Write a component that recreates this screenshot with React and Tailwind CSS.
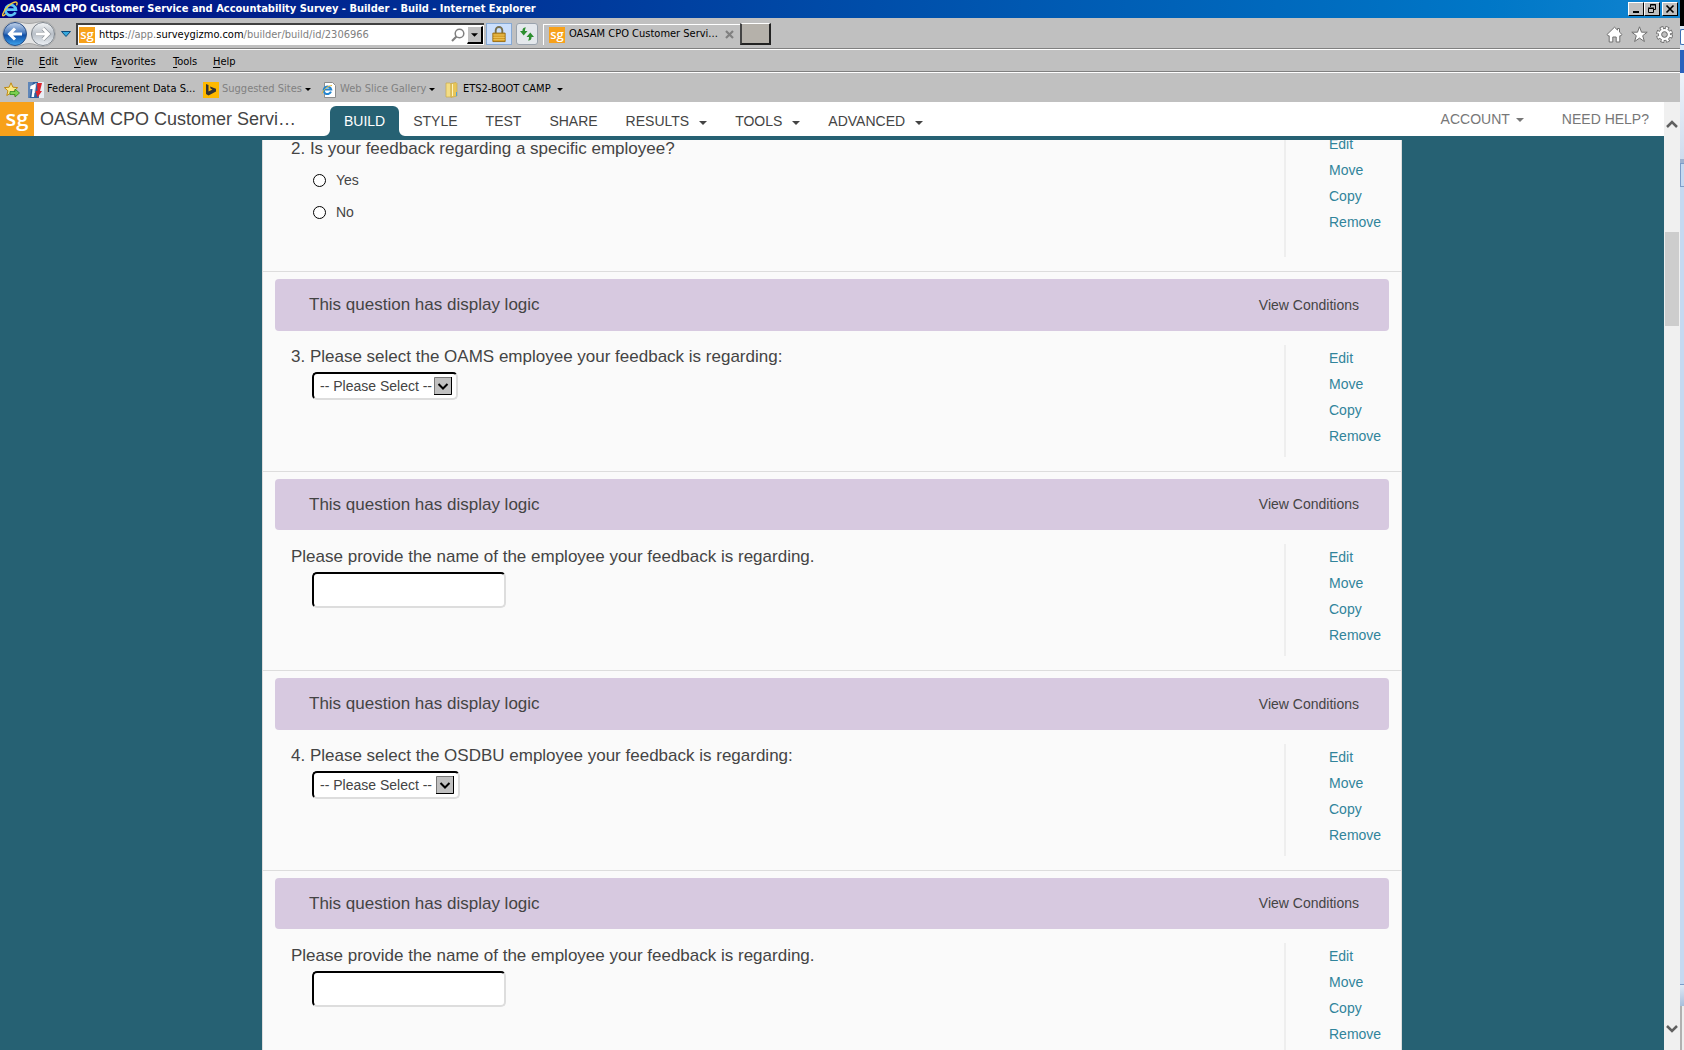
import clsx from "clsx";
import { useId } from "react";

const MENU = [
  ["", "F", "ile", "w-8"],
  ["", "E", "dit", "w-[35px]"],
  ["", "V", "iew", "w-[37px]"],
  ["F", "a", "vorites", "w-[62px]"],
  ["", "T", "ools", "w-10"],
  ["", "H", "elp", "w-10"],
];

const NAV = [
  { label: "BUILD", active: true },
  { label: "STYLE" },
  { label: "TEST" },
  { label: "SHARE" },
  { label: "RESULTS", menu: true },
  { label: "TOOLS", menu: true },
  { label: "ADVANCED", menu: true },
];

const ACTIONS = ["Edit", "Move", "Copy", "Remove"];

function Caret({ className }) {
  return (
    <svg viewBox="0 0 8 4" className={clsx("shrink-0", className)} fill="currentColor" aria-hidden="true">
      <path d="M0 0h8L4 4z" />
    </svg>
  );
}

function SgLogo({ className }) {
  return (
    <span
      className={clsx(
        "flex shrink-0 items-center justify-center bg-[#f7a11a] font-['Open_Sans',sans-serif] font-semibold text-white",
        className
      )}
    >
      sg
    </span>
  );
}

function IeIcon({ className }) {
  return (
    <svg viewBox="0 0 16 16" className={clsx("shrink-0", className)} fill="none" aria-hidden="true">
      <path d="M13.500 11.200A5.200 5.200 0 1 1 13.900 8.700H5" stroke="#5cc3f5" strokeWidth="2.800" />
      <path d="M3.600 13C1.200 15.600.2 15 .7 13.200 1.800 9 8.500 1.600 13.400 1c2-.2 2 1.700 1 3.400" stroke="#f3c73a" strokeWidth="1.400" />
    </svg>
  );
}

function TitleBar() {
  const button =
    "flex h-[14px] w-4 items-center justify-center border border-t-white border-l-white border-r-black border-b-black bg-[#c0c0c0] text-black";
  return (
    <div className="flex h-[18px] shrink-0 items-center bg-linear-to-r from-[#000080] to-[#1084d0] px-[2px]">
      <IeIcon className="size-4" />
      <h1 className="ml-[2px] flex-1 truncate text-[11px] font-bold text-white">
        OASAM CPO Customer Service and Accountability Survey - Builder - Build - Internet Explorer
      </h1>
      <button className={button} aria-label="Minimize">
        <svg viewBox="0 0 12 10" className="h-[10px] w-3">
          <path d="M3 7h6v2H3z" />
        </svg>
      </button>
      <button className={button} aria-label="Restore">
        <svg viewBox="0 0 12 10" className="h-[10px] w-3" fill="none" stroke="currentColor">
          <path d="M4.500 3V.5h5v5H8M4 1h6M2.500 4.500h5v4h-5zM2 4h6" />
        </svg>
      </button>
      <button className={clsx(button, "ml-[2px]")} aria-label="Close">
        <svg viewBox="0 0 12 10" className="h-[10px] w-3" fill="none" stroke="currentColor" strokeWidth="1.700">
          <path d="M2.500 1.500l7 7m0-7l-7 7" />
        </svg>
      </button>
    </div>
  );
}

function HistoryButtons() {
  return (
    <div className="relative h-[26px] w-[54px] shrink-0">
      <svg viewBox="0 0 54 26" className="h-[26px] w-[54px]" fill="none" aria-hidden="true">
        <defs>
          <linearGradient id="back" x1="0" y1="0" x2="0" y2="1">
            <stop offset="0" stopColor="#c3d3ea" />
            <stop offset=".45" stopColor="#4a7cc0" />
            <stop offset=".55" stopColor="#0f4fa8" />
            <stop offset="1" stopColor="#3fa5ee" />
          </linearGradient>
          <linearGradient id="forward" x1="0" y1="0" x2="0" y2="1">
            <stop offset="0" stopColor="#f4f6f8" />
            <stop offset=".5" stopColor="#b9c0c8" />
            <stop offset="1" stopColor="#eef2f6" />
          </linearGradient>
        </defs>
        <path
          d="M13 .5c6 0 8 2 14 2s8-2 14-2a12.500 12.500 0 0 1 0 25c-6 0-8-3-14-3s-8 3-14 3A12.500 12.500 0 0 1 13 .5z"
          fill="#e4e4e4"
          stroke="#a6a6a6"
        />
        <circle cx="13" cy="13" r="11.500" fill="url(#back)" stroke="#2b4f86" />
        <circle cx="41" cy="13" r="11.500" fill="url(#forward)" stroke="#7d848c" />
        <path d="M20 13H8m5-5.500L7.500 13l5.500 5.500" stroke="#fff" strokeWidth="3" />
        <path d="M34 13h12m-5-5.500l5.500 5.500-5.500 5.500" stroke="#8b9096" strokeWidth="4" />
        <path d="M34 13h12m-5-5.500l5.500 5.500-5.500 5.500" stroke="#fff" strokeWidth="2.800" />
      </svg>
      <button className="absolute inset-y-0 left-0 w-[26px] rounded-full" aria-label="Back" />
      <button className="absolute inset-y-0 right-0 w-[26px] rounded-full" aria-label="Forward" />
    </div>
  );
}

function AddressBar() {
  return (
    <div className="flex h-8 shrink-0 items-center border-b border-white bg-[#c0c0c0] pt-px shadow-[inset_0_-1px_0_#808080]">
      <div className="flex h-[30px] flex-1 items-center pl-[2px]">
        <HistoryButtons />
        <button className="ml-[5px]" aria-label="Recent pages">
          <svg viewBox="0 0 10 6" className="h-[6px] w-[10px]">
            <path d="M.5.5h9L5 5.500z" fill="#36a9dd" stroke="#0d4c7c" />
          </svg>
        </button>
        <div className="ml-[5px] flex h-[22px] w-[408px] items-center border-t-2 border-l-2 border-[#404040] bg-white px-px">
          <SgLogo className="size-4 pb-[2px] text-[13px] leading-[12px]" />
          <div className="ml-1 flex-1 truncate text-[11px] text-[#808080]">
            <span className="text-black">https</span>://app.<span className="text-black">surveygizmo.com</span>
            /builder/build/id/2306966
          </div>
          <button aria-label="Search">
            <svg viewBox="0 0 14 14" className="size-[14px]" fill="none" stroke="#808080">
              <circle cx="8.500" cy="5.500" r="4.300" strokeWidth="1.500" />
              <path d="M5.500 8.500L1 13" strokeWidth="2.200" />
            </svg>
          </button>
          <button
            className="ml-[2px] flex h-[18px] w-4 items-center justify-center border border-t-white border-r-2 border-b-2 border-l-white border-r-black border-b-black bg-[#c0c0c0]"
            aria-label="Show address list"
          >
            <Caret className="h-1 w-[7px] text-black" />
          </button>
        </div>
        <button
          className="ml-[2px] flex h-[22px] w-[26px] items-center justify-center border border-[#86a9d4] bg-[#cbdffc]"
          aria-label="Security report"
        >
          <svg viewBox="0 0 14 18" className="h-[17px] w-[14px]" fill="none">
            <path d="M3.500 8V4.500a3.500 3.500 0 0 1 7 0V8" stroke="#77704f" strokeWidth="2" />
            <path d="M.5 7.500h13v9H.5z" fill="#d49b24" stroke="#9a6d12" />
            <path d="M1 9.500h12M1 12h12M1 14.500h12" stroke="#efc961" />
          </svg>
        </button>
        <button
          className="ml-1 flex size-[22px] items-center justify-center rounded-[3px] border border-[#9aa3ad] bg-[#e4e8ec]"
          aria-label="Refresh"
        >
          <svg viewBox="0 0 16 16" className="size-4" fill="#2c8f2f">
            <path d="M7 1.500C4 1.500 3.500 3 3.500 5H1l3.700 4.500L8.500 5H6c0-1.500.2-2.500 1-3.500zM9 14.500c3 0 3.500-1.500 3.500-3.500H15l-3.700-4.500L7.500 11H10c0 1.500-.2 2.500-1 3.500z" />
          </svg>
        </button>
        <div className="ml-[5px] flex h-[21px] w-[197px] items-center border-t border-l border-white pr-[6px] pl-[5px]">
          <SgLogo className="size-4 pb-[2px] text-[13px] leading-[12px]" />
          <span className="ml-1 flex-1 text-[11px] whitespace-nowrap text-black">OASAM CPO Customer Servi...</span>
          <button aria-label="Close tab">
            <svg viewBox="0 0 9 9" className="size-[9px]" fill="none" stroke="#808080" strokeWidth="2.200">
              <path d="M1 1l7 7m0-7L1 8" />
            </svg>
          </button>
        </div>
        <button
          className="h-[22px] w-[31px] border border-t-white border-r-2 border-b-2 border-l-2 border-r-[#222] border-b-[#222] border-l-[#444] bg-[#b5b1aa]"
          aria-label="New tab"
        />
      </div>
      <div className="flex items-center gap-2 pr-[7px]">
        <button aria-label="Home">
          <svg viewBox="0 0 17 17" className="size-[17px]" fill="#fff" stroke="#707070">
            <path d="M8.500 1.200L1 8.500l1 1.300h1.200v6.200h3.600v-5h3.400v5h3.600V9.800H15l1-1.300-2.500-2.400V2.500h-2v1.600z" />
          </svg>
        </button>
        <button aria-label="Favorites">
          <svg viewBox="0 0 17 17" className="size-[17px]" fill="#fff" stroke="#707070">
            <path d="M8.500.8l2 5.400h5.700l-4.500 3.500 1.700 5.800-4.900-3.400-4.900 3.400 1.700-5.800L.8 6.200h5.700z" />
          </svg>
        </button>
        <button aria-label="Tools">
          <svg viewBox="0 0 17 17" className="size-[17px]" fill="none">
            <circle cx="8.500" cy="8.500" r="6" stroke="#707070" strokeWidth="5" strokeDasharray="3.100 1.612" />
            <circle cx="8.500" cy="8.500" r="5.600" stroke="#707070" strokeWidth="1.600" />
            <circle cx="8.500" cy="8.500" r="6" stroke="#fff" strokeWidth="3.200" strokeDasharray="1.900 2.812" strokeDashoffset="-.6" />
            <circle cx="8.500" cy="8.500" r="4.300" stroke="#fff" strokeWidth="2.600" />
            <circle cx="8.500" cy="8.500" r="2.800" stroke="#707070" fill="#c0c0c0" />
          </svg>
        </button>
      </div>
    </div>
  );
}

function MenuBar() {
  return (
    <div className="flex h-[23px] shrink-0 items-center border-b border-white bg-[#c0c0c0] pt-[2px] pl-[7px] text-[11px] text-black shadow-[inset_0_-1px_0_#808080]">
      {MENU.map(([before, key, after, width]) => (
        <button key={key} className={clsx("text-left", width)}>
          {before}
          <span className="underline underline-offset-2">{key}</span>
          {after}
        </button>
      ))}
    </div>
  );
}

function FavoritesBar() {
  return (
    <div className="flex h-[29px] shrink-0 items-center bg-[#c0c0c0] pt-1 pl-1 text-[11px] text-black">
      <button aria-label="Add to favorites bar">
        <svg viewBox="0 0 16 16" className="size-4">
          <path d="M7 .8l1.900 4.400 4.800.4-3.600 3.200 1 4.700L7 11l-4.200 2.500 1.100-4.700L.4 5.600l4.700-.4z" fill="#fbe98a" stroke="#c08a12" />
          <path d="M6 9.500h5V7l4.500 4-4.500 4v-2.500H6z" fill="#7bd04f" stroke="#2f8a22" strokeWidth=".8" />
        </svg>
      </button>
      <a href="#fpds" className="ml-2 flex w-[175px] items-center gap-[3px] whitespace-nowrap">
        <svg viewBox="0 0 16 16" className="size-4 shrink-0">
          <path d="M0 0h16v16H0z" fill="#2d5f9e" />
          <path d="M0 0h5L1.500 16H0z" fill="#5f86b8" />
          <path d="M10 0h6v16h-5z" fill="#e9eef5" />
          <path d="M2.500 4l5-2.500L6 15H3.500l1-8H2z" fill="#fff" />
          <path d="M9 1h5l-2 8h2l-4.500 6.500L7.500 9h2z" fill="#dc2630" />
          <path d="M8 1l-1.500 10" stroke="#fff" strokeWidth=".8" />
        </svg>
        Federal Procurement Data S...
      </a>
      <button className="flex w-[118px] items-center text-[#808080]">
        <svg viewBox="0 0 16 16" className="size-4 shrink-0">
          <path d="M0 0h16v16H0z" fill="#ffb900" />
          <path d="M3 2l2.500 1v6.500l4-2-1.800-.8L7 4.500l6 2.300v2.700L5.500 13.500 3 12z" fill="#333" />
        </svg>
        <span className="ml-[3px] flex-1 text-left whitespace-nowrap">Suggested Sites</span>
        <Caret className="mr-[10px] h-[3px] w-[6px] text-black" />
      </button>
      <button className="flex w-[124px] items-center text-[#808080]">
        <svg viewBox="0 0 16 16" className="size-4 shrink-0" fill="none">
          <path d="M3.500.5h8l3 3v12h-11z" fill="#fff" stroke="#8d8d8d" />
          <path d="M10 9.700a3.800 3.800 0 1 1 .2-2.200H4" stroke="#2386d1" strokeWidth="2" />
          <path d="M1 11.500C2 8 7 3.500 11 3.500" stroke="#e6b93a" />
        </svg>
        <span className="ml-[3px] flex-1 text-left whitespace-nowrap">Web Slice Gallery</span>
        <Caret className="mr-[10px] h-[3px] w-[6px] text-black" />
      </button>
      <button className="flex w-[118px] items-center">
        <svg viewBox="0 0 14 16" className="h-4 w-[14px] shrink-0">
          <path d="M1 1h4l1 1v13H1z" fill="#f3dd86" stroke="#c9a94a" strokeWidth=".7" />
          <path d="M6 1.500l5-1 1 1V14l-6 1.500z" fill="#e7c559" stroke="#c9a94a" strokeWidth=".7" />
          <path d="M7.500 2v12" stroke="#fdf3c0" />
          <path d="M11.500 10v4" stroke="#4da0dc" />
        </svg>
        <span className="ml-1 flex-1 text-left whitespace-nowrap">ETS2-BOOT CAMP</span>
        <Caret className="h-[3px] w-[6px]" />
      </button>
    </div>
  );
}

function Flare({ className }) {
  return (
    <svg viewBox="0 0 6 6" className={clsx("absolute bottom-0 size-[6px]", className)} fill="#266173" aria-hidden="true">
      <path d="M6 0v6H0a6 6 0 0 0 6-6z" />
    </svg>
  );
}

function AppHeader() {
  return (
    <header className="flex h-[34px] shrink-0 bg-white text-[14px] text-[#444]">
      <SgLogo className="w-[34px] pb-1 text-[22px] leading-[22px]" />
      <h2 className="ml-[6px] w-[290px] self-center truncate text-[18px] leading-6">OASAM CPO Customer Servi…</h2>
      <nav className="flex flex-1 pt-1">
        {NAV.map(({ label, active, menu }) => (
          <a
            key={label}
            href={`#${label.toLowerCase()}`}
            className={clsx(
              "relative flex items-center px-[14px]",
              active && "rounded-t-[6px] bg-[#266173] text-white"
            )}
          >
            {active && <Flare className="-left-[6px]" />}
            {label}
            {menu && <Caret className="mt-1 ml-[10px] h-1 w-2" />}
            {active && <Flare className="-right-[6px] -scale-x-100" />}
          </a>
        ))}
      </nav>
      <div className="flex items-center gap-[38px] pr-[15px] text-[#777]">
        <a href="#account" className="flex items-center">
          ACCOUNT
          <Caret className="mt-[2px] ml-[6px] h-1 w-2" />
        </a>
        <a href="#help">NEED HELP?</a>
      </div>
    </header>
  );
}

function Actions({ className }) {
  return (
    <div className={clsx("w-[117px] shrink-0 border-l-2 border-[#eee] pl-[43px] text-[14px] leading-[26px] text-[#31849b]", className)}>
      {ACTIONS.map((action) => (
        <a key={action} href={`#${action.toLowerCase()}`} className="block">
          {action}
        </a>
      ))}
    </div>
  );
}

function LogicBanner({ className }) {
  return (
    <div className={clsx("mx-3 mt-[7px] mb-[14px] flex items-center justify-between rounded-[4px] bg-[#d7c9e0] pr-[30px] pl-[34px]", className)}>
      <p className="text-[17px]">This question has display logic</p>
      <a href="#conditions" className="text-[14px]">
        View Conditions
      </a>
    </div>
  );
}

const FIELD = "rounded-[5px] border-2 border-t-black border-l-black border-r-[#ddd] border-b-[#ddd] bg-white";

function SelectQuestion({ children, width }) {
  const id = useId();
  return (
    <section className="border-b border-[#ddd] pb-[14px]">
      <LogicBanner className="h-[52px]" />
      <div className="flex">
        <div className="flex-1 pl-7">
          <label htmlFor={id} className="block text-[17px] leading-6">
            {children}
          </label>
          <div className={clsx("relative mt-[3px] ml-[21px]", width)}>
            <select id={id} className={clsx("block h-7 w-full appearance-none pl-[6px] text-[14px]", FIELD)}>
              <option>-- Please Select --</option>
            </select>
            <svg
              viewBox="0 0 18 18"
              className="pointer-events-none absolute top-[5px] right-[6px] size-[18px]"
              fill="none"
              stroke="#000"
              aria-hidden="true"
            >
              <path d="M.5.5h17v17H.5z" fill="#c0c0c0" stroke="#777" />
              <path d="M17.500 0v17.500H0" />
              <path d="M4.500 7L9 11.500 13.500 7" strokeWidth="2" />
            </svg>
          </div>
        </div>
        <Actions className="min-h-[112px]" />
      </div>
    </section>
  );
}

function TextQuestion({ children }) {
  const id = useId();
  return (
    <section className="border-b border-[#ddd] pb-[14px]">
      <LogicBanner className="h-[51px]" />
      <div className="flex">
        <div className="flex-1 pt-px pl-7">
          <label htmlFor={id} className="block text-[17px] leading-6">
            {children}
          </label>
          <input id={id} type="text" className={clsx("mt-[3px] ml-[21px] block h-9 w-[194px] px-2 text-[14px]", FIELD)} />
        </div>
        <Actions className="min-h-[112px]" />
      </div>
    </section>
  );
}

function RadioQuestion() {
  return (
    <section className="-mt-[9px] flex border-b border-[#ddd] pb-[14px]">
      <fieldset className="flex-1 pt-[6px] pl-7">
        <legend className="contents text-[17px] leading-6">2. Is your feedback regarding a specific employee?</legend>
        <div className="mt-[3px] ml-[22px] text-[14px]">
          {["Yes", "No"].map((option) => (
            <label key={option} className="flex h-8 items-center gap-[10px]">
              <input
                type="radio"
                name="specific-employee"
                className="size-[13px] appearance-none rounded-full border border-black bg-white checked:border-4"
              />
              {option}
            </label>
          ))}
        </div>
      </fieldset>
      <Actions className="min-h-[126px]" />
    </section>
  );
}

function ScrollBar() {
  return (
    <div className="flex w-4 shrink-0 flex-col items-center bg-[#f0f0f0] pt-[17px] pb-4" aria-hidden="true">
      <svg viewBox="0 0 12 10" className="h-[10px] w-3" fill="none" stroke="#606060" strokeWidth="2.500">
        <path d="M1 8l5-5 5 5" />
      </svg>
      <div className="mt-[103px] h-[94px] w-[14px] bg-[#cdcdcd]" />
      <svg viewBox="0 0 12 10" className="mt-auto h-[10px] w-3" fill="none" stroke="#606060" strokeWidth="2.500">
        <path d="M1 2l5 5 5-5" />
      </svg>
    </div>
  );
}

// Sliver of the window that sits behind the browser.
function BackgroundWindow() {
  return (
    <div className="flex w-1 shrink-0 flex-col bg-[#c5d9f1]" aria-hidden="true">
      <div className="h-[26px] bg-black" />
      <div className="h-[3px] bg-[#dfe9f5]" />
      <div className="h-4 rounded-l-[2px] border border-r-0 border-[#3c6eb4] bg-white" />
      <div className="h-[5px] bg-[#dfe9f5]" />
      <div className="h-[23px] bg-[#2a62bd]" />
      <div className="h-[86px] bg-linear-to-b from-[#edf3fa] to-[#cfdcee]" />
      <div className="h-1 bg-[#9db2d0]" />
      <div className="h-6 border border-r-0 border-[#7c9cc8]" />
      <div className="flex-1" />
      <div className="h-[22px] border-t border-[#7c9cc8] bg-linear-to-b from-[#dfe9f5] to-[#a9bfdc]" />
      <div className="h-[44px] border-l-2 border-[#b0b0b0] bg-[#eee]" />
    </div>
  );
}

export default function App() {
  return (
    <div className="flex h-screen overflow-hidden font-['Liberation_Sans',Arial,sans-serif]">
      <div className="flex min-w-0 flex-1 flex-col">
        <div className="font-['DejaVu_Sans_Condensed','DejaVu_Sans',sans-serif]">
          <TitleBar />
          <AddressBar />
          <MenuBar />
          <FavoritesBar />
        </div>
        <div className="flex min-h-0 flex-1">
          <div className="flex min-w-0 flex-1 flex-col bg-[#266173]">
            <AppHeader />
            <main className="mt-1 min-h-0 flex-1 overflow-hidden">
              <div className="mx-auto min-h-full max-w-[1140px] border-x border-[#ddd] bg-[#fafafa] text-[#444]">
                <RadioQuestion />
                <SelectQuestion width="w-[146px]">
                  3. Please select the OAMS employee your feedback is regarding:
                </SelectQuestion>
                <TextQuestion>Please provide the name of the employee your feedback is regarding.</TextQuestion>
                <SelectQuestion width="w-[148px]">
                  4. Please select the OSDBU employee your feedback is regarding:
                </SelectQuestion>
                <TextQuestion>Please provide the name of the employee your feedback is regarding.</TextQuestion>
              </div>
            </main>
          </div>
          <ScrollBar />
        </div>
      </div>
      <BackgroundWindow />
    </div>
  );
}
